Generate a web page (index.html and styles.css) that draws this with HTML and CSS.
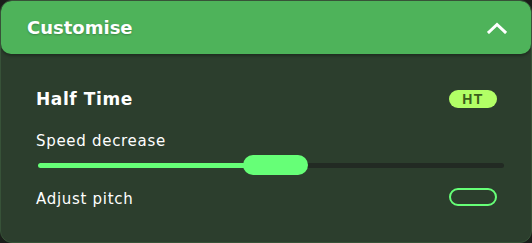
FILE: index.html
```html
<!DOCTYPE html>
<html>
<head>
<meta charset="utf-8">
<link rel="stylesheet" href="styles.css">
</head>
<body>
<div class="panel">
  <div class="header">
    <span class="title">Customise</span>
    <svg class="chevron" width="20" height="12" viewBox="0 0 20 12"><path d="M2 10 L10 2.5 L18 10" fill="none" stroke="#fff" stroke-width="3" stroke-linecap="square" stroke-linejoin="miter"/></svg>
  </div>
  <div class="content">
    <div class="row">
      <span class="mod-name">Half Time</span>
      <span class="badge">HT</span>
    </div>
    <div class="label">Speed decrease</div>
    <div class="slider">
      <div class="track"></div>
      <div class="fill" style="width: 210px"></div>
      <div class="thumb" style="left: 205px"></div>
    </div>
    <div class="row row-pitch">
      <span class="label">Adjust pitch</span>
      <span class="toggle"></span>
    </div>
  </div>
</div>
</body>
</html>
```

FILE: styles.css
```css
html, body {
  margin: 0;
  padding: 0;
  background: #1a1e1a;
}
body {
  font-family: "DejaVu Sans", "Noto Sans", sans-serif;
  color: #fff;
}
.panel {
  width: 532px;
  height: 243px;
  box-sizing: border-box;
  border: 1px solid #375238;
  border-radius: 12px;
  background: #2c3e2d;
  overflow: hidden;
}
.header {
  height: 53px;
  box-sizing: border-box;
  background: #4eb35a;
  border-radius: 10px;
  display: flex;
  align-items: center;
  justify-content: space-between;
  padding: 0 24px 0 26px;
  box-shadow: 0 2px 3px rgba(0, 0, 0, 0.3);
}
.title {
  font-size: 18px;
  font-weight: 700;
  text-shadow: 0 1px 2px rgba(0, 0, 0, 0.25);
}
.chevron {
  display: block;
  margin-top: 1px;
}
.content {
  padding: 36px 34px 0 35px;
}
.row {
  display: flex;
  align-items: center;
  justify-content: space-between;
  height: 18px;
}
.mod-name {
  font-size: 17px;
  font-weight: 700;
  letter-spacing: 0.6px;
}
.badge {
  width: 48px;
  height: 18px;
  margin-top: -1px;
  border-radius: 9px;
  background: #b2ff66;
  color: #3a5e1c;
  font-family: "Liberation Sans", sans-serif;
  font-size: 14px;
  font-weight: 700;
  letter-spacing: 1.5px;
  display: flex;
  align-items: center;
  justify-content: center;
}
.label {
  font-size: 15px;
  line-height: 18px;
  letter-spacing: 0.7px;
}
.content > .label {
  margin-top: 24px;
}
.slider {
  position: relative;
  height: 20px;
  margin: 5px -7px 0 2px;
}
.track {
  position: absolute;
  left: 0;
  right: 0;
  top: 7.5px;
  height: 5px;
  border-radius: 3px;
  background: #222a23;
}
.fill {
  position: absolute;
  left: 0;
  top: 7.5px;
  height: 5px;
  border-radius: 3px;
  background: #66ff77;
}
.thumb {
  position: absolute;
  top: 0;
  width: 65px;
  height: 20px;
  border-radius: 10px;
  background: #66ff77;
}
.row-pitch {
  margin-top: 13px;
}
.row-pitch .label {
  padding-top: 3px;
}
.toggle {
  width: 48px;
  height: 18px;
  box-sizing: border-box;
  border: 2.5px solid #66ff77;
  border-radius: 9px;
}
```
